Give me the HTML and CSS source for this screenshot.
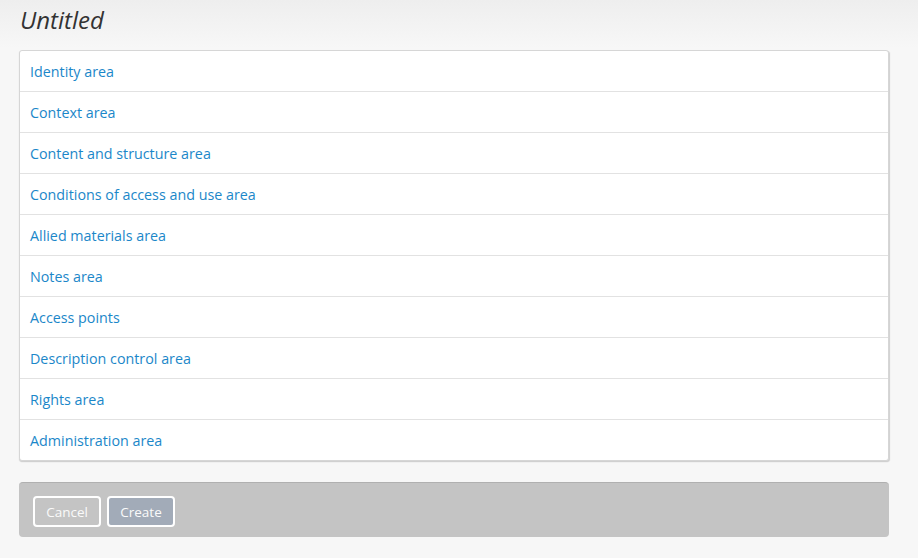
FILE: index.html
```html
<!DOCTYPE html>
<html>
<head>
<meta charset="utf-8">
<link rel="stylesheet" href="styles.css">
</head>
<body>
<div class="page">
  <h1 class="title">Untitled</h1>
  <div class="card">
    <a class="row" href="#">Identity area</a>
    <a class="row" href="#">Context area</a>
    <a class="row" href="#">Content and structure area</a>
    <a class="row" href="#">Conditions of access and use area</a>
    <a class="row" href="#">Allied materials area</a>
    <a class="row" href="#">Notes area</a>
    <a class="row" href="#">Access points</a>
    <a class="row" href="#">Description control area</a>
    <a class="row" href="#">Rights area</a>
    <a class="row" href="#">Administration area</a>
  </div>
  <div class="actions">
    <button class="btn btn-cancel">Cancel</button>
    <button class="btn btn-create">Create</button>
  </div>
</div>
</body>
</html>
```
FILE: styles.css
```css
html, body {
  margin: 0;
  padding: 0;
}
body {
  background: linear-gradient(to bottom, #eeeeee 0px, #f7f7f7 48px, #f7f7f7 100%);
  font-family: "Open Sans", "Liberation Sans", sans-serif;
  height: 558px;
}
.page {
  padding: 0 29px 0 19px;
}
.title {
  margin: 0;
  padding: 4px 0 0 1px;
  height: 45px;
  box-sizing: border-box;
  font-size: 24px;
  font-style: italic;
  font-weight: 400;
  color: #333;
  line-height: 32px;
}
.card {
  background: #fff;
  border: 1px solid #d6d6d6;
  border-radius: 3px;
  box-shadow: 1px 1px 1px #d0d0d0, 0 1px 1px #d0d0d0;
  margin-top: 5px;
}
.row {
  display: block;
  height: 40px;
  line-height: 42px;
  overflow: hidden;
  padding-left: 10px;
  font-size: 14.3px;
  color: #1b87c9;
  text-decoration: none;
  border-top: 1px solid #e2e2e2;
}
.row:first-child {
  border-top: none;
}
.actions {
  margin-top: 21px;
  background: #c4c4c4;
  border-top: 1px solid #b0b0b0;
  border-radius: 4px;
  height: 55px;
  box-sizing: border-box;
  padding: 13px 14px;
  display: flex;
  gap: 6px;
}
.btn {
  font-family: "Open Sans", "Liberation Sans", sans-serif;
  font-size: 13.5px;
  height: 31px;
  padding: 0;
  border: 2px solid #fff;
  border-radius: 4px;
  color: #fafafa;
  cursor: pointer;
  width: 68px;
}
.btn-cancel {
  background: transparent;
}
.btn-create {
  background: #a2abb8;
}
```
